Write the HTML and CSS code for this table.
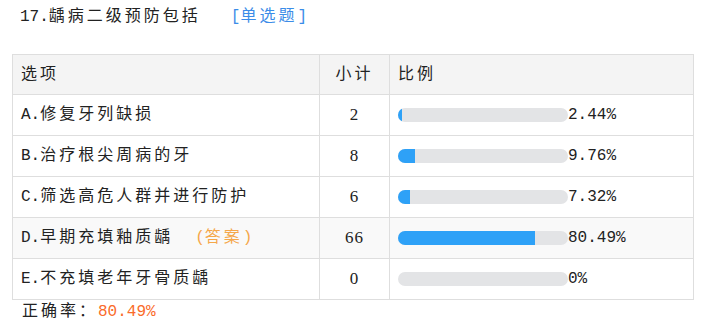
FILE: index.html
```html
<!DOCTYPE html>
<html lang="zh-CN">
<head>
<meta charset="utf-8">
<title>龋病二级预防包括</title>
<link rel="stylesheet" href="styles.css">
</head>
<body>
<div class="question">
  <div class="q-title"><span class="lat">17.</span>龋病二级预防包括<span class="q-type"><span class="lat">[</span>单选题<span class="lat">]</span></span></div>
  <table class="stats">
    <colgroup><col class="c-opt"><col class="c-num"><col class="c-pct"></colgroup>
    <thead>
      <tr><th class="opt">选项</th><th class="num">小计</th><th class="pct">比例</th></tr>
    </thead>
    <tbody>
      <tr><td class="opt"><span class="lat">A.</span>修复牙列缺损</td><td class="num">2</td><td class="pct"><div class="bar-wrap"><div class="bar"><div class="fill" style="width:2.44%"></div></div><span class="val">2.44%</span></div></td></tr>
      <tr><td class="opt"><span class="lat">B.</span>治疗根尖周病的牙</td><td class="num">8</td><td class="pct"><div class="bar-wrap"><div class="bar"><div class="fill" style="width:9.76%"></div></div><span class="val">9.76%</span></div></td></tr>
      <tr><td class="opt"><span class="lat">C.</span>筛选高危人群并进行防护</td><td class="num">6</td><td class="pct"><div class="bar-wrap"><div class="bar"><div class="fill" style="width:7.32%"></div></div><span class="val">7.32%</span></div></td></tr>
      <tr class="hl"><td class="opt"><span class="lat">D.</span>早期充填釉质龋<span class="answer"><span class="lat">(</span>答案<span class="lat">)</span></span></td><td class="num">66</td><td class="pct"><div class="bar-wrap"><div class="bar"><div class="fill" style="width:80.49%"></div></div><span class="val">80.49%</span></div></td></tr>
      <tr><td class="opt"><span class="lat">E.</span>不充填老年牙骨质龋</td><td class="num">0</td><td class="pct"><div class="bar-wrap"><div class="bar"><div class="fill" style="width:0%"></div></div><span class="val">0%</span></div></td></tr>
    </tbody>
  </table>
  <div class="rate">正确率：<span class="rate-val">80.49%</span></div>
</div>
</body>
</html>
```
FILE: styles.css
```css
html, body {
  margin: 0;
  padding: 0;
  background: #fff;
}
body {
  font-family: "Liberation Mono", "Noto Sans CJK SC", monospace;
  font-size: 16px;
  color: #222;
  letter-spacing: 3px;
}
.lat {
  letter-spacing: 0;
}
.question {
  padding: 7px 0 0 20px;
}
.q-title {
  line-height: 20px;
  height: 20px;
}
.q-type {
  color: #3b8ce8;
  margin-left: 30px;
}
.stats {
  margin: 27px 0 0 -8px;
  border-collapse: collapse;
  table-layout: fixed;
  width: 681px;
}
.c-opt { width: 307px; }
.c-num { width: 70px; }
.c-pct { width: 304px; }
.stats th, .stats td {
  border: 1px solid #dedede;
  padding: 0 0 0 8px;
  height: 40px;
  font-weight: normal;
  text-align: left;
  white-space: nowrap;
  line-height: 20px;
}
.stats th {
  background: #f4f4f4;
  height: 39px;
}
.stats .num {
  text-align: center;
  padding: 0;
}
.stats td.num {
  font-family: "Liberation Serif", serif;
  font-size: 17px;
  letter-spacing: 1px;
}
.stats tr.hl td {
  background: #f9f9f9;
}
.answer {
  color: #f5a74a;
  margin-left: 22px;
}
.bar-wrap {
  display: flex;
  align-items: center;
}
.bar {
  width: 170px;
  height: 14px;
  border-radius: 7px;
  background: #e3e4e6;
  overflow: hidden;
}
.fill {
  height: 100%;
  background: #2ea1f7;
}
.val {
  letter-spacing: 0;
}
.rate {
  line-height: 20px;
  margin-top: 2px;
  padding-left: 2px;
}
.rate-val {
  color: #fa6b2a;
  letter-spacing: 0;
}
```
